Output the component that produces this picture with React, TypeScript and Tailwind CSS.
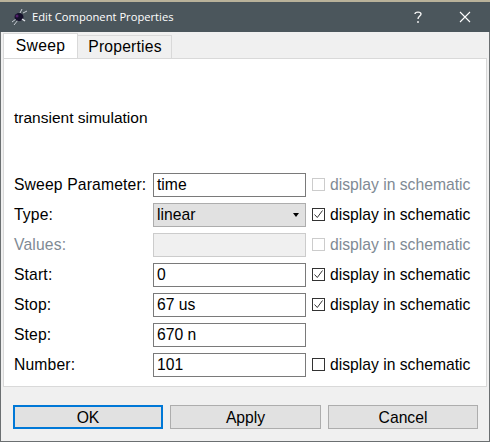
import React from "react";

const Check = ({ state }: { state: "on" | "off" | "disabled" }) => (
  <span className={`w-[13px] h-[13px] border flex items-center justify-center shrink-0 bg-white ${state === "disabled" ? "border-[#cccccc]" : "border-[#333333]"}`}>
    {state === "on" && (
      <svg width="11" height="11" viewBox="0 0 11 11" fill="none">
        <path d="M1.5 5.5 L4.3 8.5 L9.5 1.5" stroke="#333333" strokeWidth="1" />
      </svg>
    )}
  </span>
);

const Disp = ({ state }: { state: "on" | "off" | "disabled" }) => (
  <div className={`flex items-center gap-[5px] ml-[6px] ${state === "disabled" ? "text-[#808a94]" : "text-black"}`}>
    <Check state={state} />
    <span>display in schematic</span>
  </div>
);

const Input = ({ value }: { value: string }) => (
  <div className="w-[153px] h-[24px] border border-[#7a7a7a] bg-white pl-[3px] flex items-center text-black">{value}</div>
);

const Row = ({ label, children, muted }: { label: string; children: React.ReactNode; muted?: boolean }) => (
  <div className="flex items-center h-[24px]">
    <div className={`w-[139px] whitespace-nowrap tracking-[0.15px] ${muted ? "text-[#808a94]" : "text-black"}`}>{label}</div>
    {children}
  </div>
);

const Btn = ({ label, active, wide }: { label: string; active?: boolean; wide?: boolean }) => (
  <div className={`${wide ? "w-[151px]" : "w-[150px]"} h-[24px] pt-px bg-[#e1e1e1] flex items-center justify-center text-black ${active ? "border-2 border-[#0078d7]" : "border border-[#adadad]"}`}>{label}</div>
);

export default function App() {
  return (
    <div className="w-[490px] h-[442px] bg-[#f0f0f0] flex flex-col border-x border-b border-[#6b6f71] text-[15.7px] leading-none font-['Liberation_Sans',Arial,sans-serif]">
      <div className="h-[2px] bg-[#b9b29a] -mx-px" />
      <div className="h-[30px] bg-[#4b565c] -mx-px flex items-center text-white shrink-0">
        <svg width="18" height="18" viewBox="0 0 18 18" className="ml-[10px] mr-[4px]">
          <path d="M2 14 L6 11 M4 17 L8 12 M13 5 L17 3 M10 5 L12 1" stroke="#c8ccd4" strokeWidth="1" />
          <ellipse cx="9" cy="9" rx="4.5" ry="4" fill="#14102a" />
          <circle cx="7" cy="8" r="1.5" fill="#50206a" />
          <path d="M12 11 L15 13" stroke="#e0e2e8" strokeWidth="1.5" />
        </svg>
        <span className="font-['Open_Sans',sans-serif] text-[11.2px]">Edit Component Properties</span>
        <svg width="12" height="14" viewBox="0 0 12 14" className="ml-auto mr-[35px]">
          <path d="M3 4 C3 1.5 9 1.5 9 4 C9 6 6 6 6 9 M6 11 V13" stroke="#f4f4f4" strokeWidth="1.4" fill="none" />
        </svg>
        <svg width="12" height="12" viewBox="0 0 12 12" className="mr-[19px]">
          <path d="M1 1 L11 11 M11 1 L1 11" stroke="#ffffff" strokeWidth="1.1" />
        </svg>
      </div>

      <div className="flex items-end h-[26px] ml-[2px] shrink-0 relative z-10 text-black">
        <div className="w-[75px] h-[25px] bg-white border border-b-0 border-[#d9d9d9] flex items-center justify-center tracking-[0.3px]">Sweep</div>
        <div className="w-[94px] h-[23px] pl-px bg-[#f0f0f0] border border-l-0 border-b-0 border-[#d9d9d9] flex items-center justify-center tracking-[0.2px]">Properties</div>
      </div>

      <div className="h-[329px] bg-white border border-[#d9d9d9] ml-[2px] mr-[2px] shrink-0 flex flex-col px-[10px]">
        <div className="text-black text-[15.5px] mt-[51px] mb-[48px] h-[15px]">transient simulation</div>
        <div className="flex flex-col gap-[6px]">
          <Row label="Sweep Parameter:"><Input value="time" /><Disp state="disabled" /></Row>
          <Row label="Type:">
            <div className="w-[153px] h-[24px] bg-[#e1e1e1] border border-[#adadad] pl-[3px] pr-[5px] flex items-center justify-between text-black">
              <span>linear</span>
              <span className="w-0 h-0 border-x-[3.5px] border-x-transparent border-t-[4px] border-t-black mr-[1px]" />
            </div>
            <Disp state="on" />
          </Row>
          <Row label="Values:" muted>
            <div className="w-[153px] h-[24px] bg-[#f0f0f0] border border-[#cccccc]" />
            <Disp state="disabled" />
          </Row>
          <Row label="Start:"><Input value="0" /><Disp state="on" /></Row>
          <Row label="Stop:"><Input value="67 us" /><Disp state="on" /></Row>
          <Row label="Step:"><Input value="670 n" /></Row>
          <Row label="Number:"><Input value="101" /><Disp state="off" /></Row>
        </div>
      </div>

      <div className="flex gap-[7px] ml-[12px] mt-[18px]">
        <Btn label="OK" active />
        <Btn label="Apply" wide />
        <Btn label="Cancel" />
      </div>
    </div>
  );
}
